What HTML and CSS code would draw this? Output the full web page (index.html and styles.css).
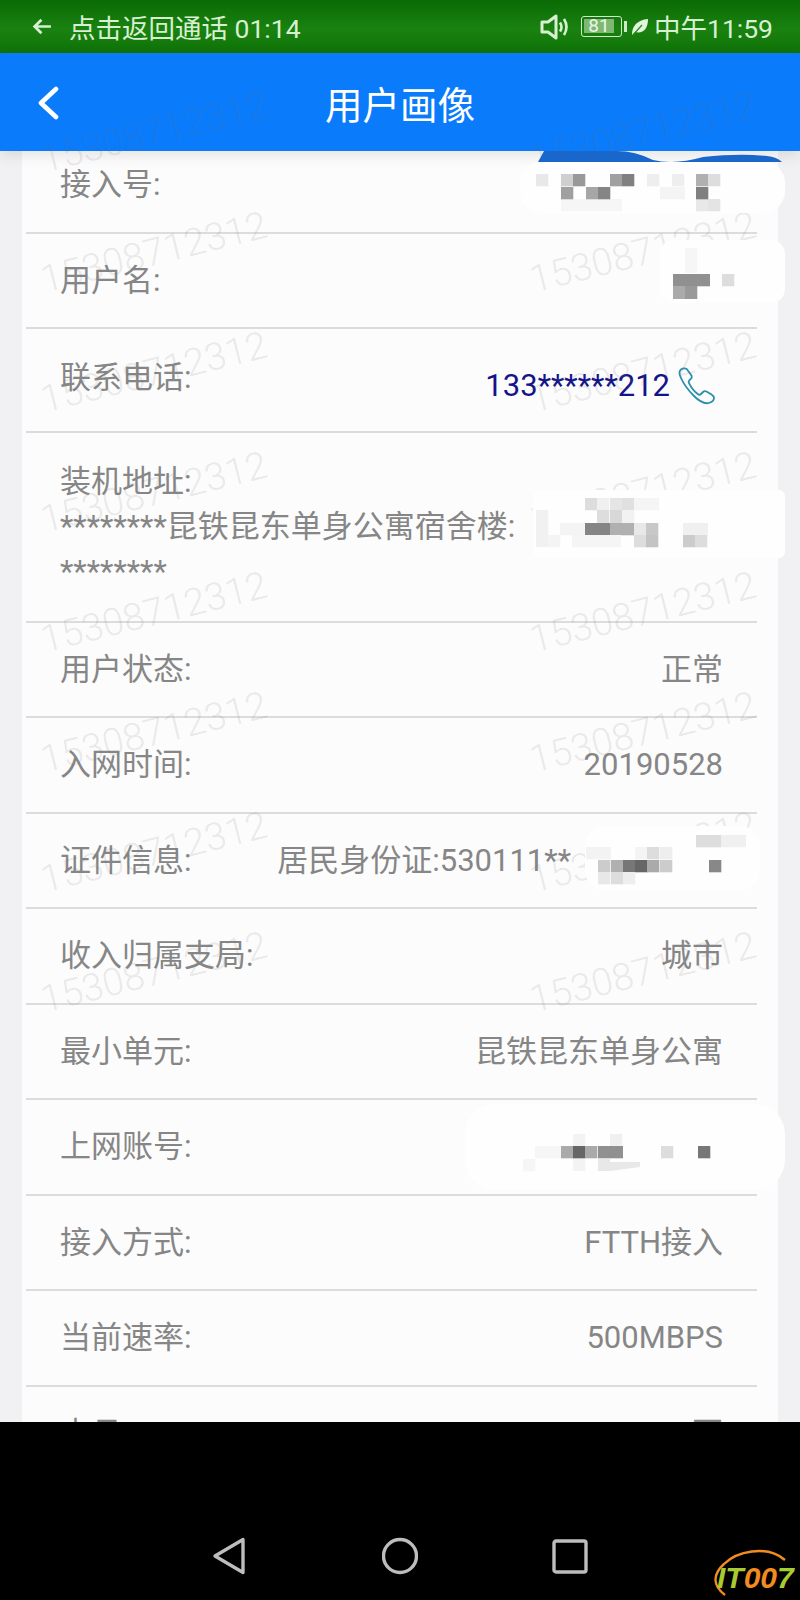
FILE: index.html
```html
<!DOCTYPE html>
<html lang="zh">
<head>
<meta charset="utf-8">
<title>用户画像</title>
<link rel="stylesheet" href="styles.css">
</head>
<body>
<div class="screen">
  <header class="status">
    <div class="status-left">
      <svg class="status-arrow" viewBox="0 0 20 20"><path d="M18 10H3M9 3.500 2.500 10 9 16.500" fill="none" stroke="#d8f0d2" stroke-width="2.600"/></svg>
      <span>点击返回通话 01:14</span>
    </div>
    <div class="status-right">
      <svg class="status-speaker" viewBox="0 0 30 26"><path d="M2 8h6l8-6v22l-8-6H2z" fill="none" stroke="#d8f0d2" stroke-width="3" stroke-linejoin="round"/><path d="M20 8.500q3 4.500 0 9M24 5q5 8 0 16" fill="none" stroke="#d8f0d2" stroke-width="2.600"/></svg>
      <div class="battery"><span class="battery-level">81</span></div>
      <span class="battery-nub"></span>
      <svg class="status-leaf" viewBox="0 0 18 18"><path d="M1 17C1 8 6 2 17 1c0 10-5 15-13 13z" fill="#e4f5de"/><path d="M2 17 11 7" stroke="#2a8a1e" stroke-width="1.200"/></svg>
      <span class="status-time">中午11:59</span>
    </div>
  </header>

  <div class="appbar">
    <svg class="appbar-back" viewBox="0 0 24 34"><path d="M20 3 5 17l15 14" fill="none" stroke="#fff" stroke-width="4.600" stroke-linecap="round" stroke-linejoin="round"/></svg>
    <h1 class="appbar-title">用户画像</h1>
  </div>

  <main class="content">
    <div class="card">
      <div class="row">
        <span>接入号:</span>
        <svg class="redact redact-access" viewBox="0 0 265 64">
          <rect y="10" width="265" height="52" rx="22" fill="#fefefe"/>
          <path d="M18 11 24 0H97q18 0 36 9 22 5 50-3 36-4 64-1 10 1 15 6z" fill="#1a67cc"/>
          <g fill="#e8e8e8"><rect x="16" y="23" width="12.300" height="12.300"/><rect x="127" y="23" width="12.300" height="12.300" fill="#eee"/><rect x="152" y="23" width="12.300" height="12.300" fill="#eee"/><rect x="176" y="48" width="12.300" height="12.300"/><rect x="188" y="48" width="12.300" height="12.300" fill="#e4e4e4"/><rect x="41" y="48" width="61" height="12.300" fill="#f6f6f6"/></g>
          <rect x="41" y="23" width="12.300" height="12.300" fill="#cfcfcf"/><rect x="53" y="23" width="12.300" height="12.300" fill="#999"/>
          <rect x="90" y="23" width="12.300" height="12.300" fill="#a0a0a0"/><rect x="102" y="23" width="12.300" height="12.300" fill="#808080"/>
          <rect x="176" y="23" width="12.300" height="12.300" fill="#b0b0b0"/><rect x="188" y="23" width="12.300" height="12.300" fill="#ddd"/>
          <rect x="41" y="36" width="12.300" height="12.300" fill="#a0a0a0"/><rect x="66" y="36" width="12.300" height="12.300" fill="#a6a6a6"/><rect x="78" y="36" width="12.300" height="12.300" fill="#858585"/>
          <rect x="140" y="36" width="25" height="12.300" fill="#f4f4f4"/><rect x="176" y="36" width="12.300" height="12.300" fill="#808080"/>
        </svg>
      </div>
      <div class="row">
        <span>用户名:</span>
        <svg class="redact redact-name" viewBox="0 0 125 63">
          <rect width="125" height="63" rx="14" fill="#fefefe"/>
          <rect x="25" y="8" width="12.300" height="25" fill="#f6f6f6"/>
          <rect x="13" y="34" width="37" height="12.300" fill="#909090"/><rect x="62" y="34" width="12.300" height="12.300" fill="#ddd"/>
          <rect x="13" y="46" width="12.300" height="13" fill="#aaa"/><rect x="25" y="46" width="12.300" height="13" fill="#999"/>
        </svg>
      </div>
      <div class="row row-top row-phone">
        <span>联系电话:</span>
        <div class="phone">
          <span>133******212</span>
          <svg class="phone-icon" viewBox="0 0 38 38"><path d="M3 2.500C1 4 1 7 3 11c3 7 8 13 13 18 5 5 11 8 15 7 3-1 5-3 5-5 0-1.500-1-2.500-2.500-3.500l-5-3c-1.500-.8-2.500-.5-3.500.5l-2 2c-1 1-2 1-3 .2-3-2-7-7-9-11-.6-1.200-.4-2 .5-3l1.500-1.500c1-1 1-2 .3-3.500L9.500 3C8.500 1 5 1 3 2.500z" fill="none" stroke="#2b8fae" stroke-width="1.800"/></svg>
        </div>
      </div>
      <div class="row row-top row-address">
        <div class="address">
          <div>装机地址:</div>
          <div>********昆铁昆东单身公寓宿舍楼:</div>
          <div>********</div>
        </div>
        <svg class="redact redact-address" viewBox="0 0 252 72">
          <rect width="252" height="68" rx="6" fill="#fefefe"/>
          <rect x="3" y="20" width="12.300" height="37" fill="#f1f1f1"/><rect x="15" y="45" width="12.300" height="12.300" fill="#f4f4f4"/>
          <rect x="52" y="8" width="12.300" height="12.300" fill="#ddd"/><rect x="64" y="8" width="12.300" height="12.300" fill="#f0f0f0"/><rect x="77" y="8" width="12.300" height="12.300" fill="#e5e5e5"/><rect x="89" y="8" width="12.300" height="12.300" fill="#e0e0e0"/><rect x="101" y="8" width="25" height="12.300" fill="#f5f5f5"/>
          <rect x="64" y="20" width="12.300" height="13" fill="#ddd"/><rect x="77" y="20" width="12.300" height="13" fill="#d8d8d8"/><rect x="89" y="20" width="12.300" height="13" fill="#f2f2f2"/>
          <rect x="27" y="33" width="25" height="12.300" fill="#f4f4f4"/><rect x="52" y="33" width="25" height="12.300" fill="#858585"/><rect x="77" y="33" width="25" height="12.300" fill="#b0b0b0"/><rect x="101" y="33" width="12.300" height="12.300" fill="#e8e8e8"/><rect x="113" y="33" width="12.300" height="12.300" fill="#c8c8c8"/><rect x="150" y="33" width="25" height="12.300" fill="#f0f0f0"/>
          <rect x="39" y="45" width="49" height="12.300" fill="#f5f5f5"/><rect x="101" y="45" width="12.300" height="12.300" fill="#ddd"/><rect x="113" y="45" width="12.300" height="12.300" fill="#c4c4c4"/><rect x="150" y="45" width="12.300" height="12.300" fill="#ccc"/><rect x="162" y="45" width="12.300" height="12.300" fill="#ddd"/>
        </svg>
      </div>
      <div class="row"><span>用户状态:</span><span>正常</span></div>
      <div class="row"><span>入网时间:</span><span>20190528</span></div>
      <div class="row">
        <span>证件信息:</span>
        <span class="value-id">居民身份证:530111**</span>
        <svg class="redact redact-id" viewBox="0 0 175 70">
          <rect width="175" height="64" rx="20" fill="#fefefe"/>
          <rect x="111" y="9" width="25" height="12.300" fill="#ddd"/><rect x="136" y="9" width="25" height="12.300" fill="#f0f0f0"/>
          <rect x="1" y="21" width="25" height="12.300" fill="#f3f3f3"/><rect x="50" y="21" width="12.300" height="12.300" fill="#f4f4f4"/><rect x="62" y="21" width="12.300" height="12.300" fill="#ddd"/><rect x="75" y="21" width="12.300" height="12.300" fill="#eee"/>
          <rect x="13" y="34" width="12.300" height="12.300" fill="#ccc"/><rect x="26" y="34" width="12.300" height="12.300" fill="#b0b0b0"/><rect x="38" y="34" width="12.300" height="12.300" fill="#777"/><rect x="50" y="34" width="12.300" height="12.300" fill="#666"/><rect x="62" y="34" width="12.300" height="12.300" fill="#aaa"/><rect x="75" y="34" width="12.300" height="12.300" fill="#ccc"/><rect x="124" y="34" width="12.300" height="12.300" fill="#888"/>
          <rect x="13" y="46" width="12.300" height="12.300" fill="#e8e8e8"/><rect x="26" y="46" width="12.300" height="12.300" fill="#ddd"/><rect x="38" y="46" width="12.300" height="12.300" fill="#eee"/>
        </svg>
      </div>
      <div class="row"><span>收入归属支局:</span><span>城市</span></div>
      <div class="row"><span>最小单元:</span><span>昆铁昆东单身公寓</span></div>
      <div class="row">
        <span>上网账号:</span>
        <svg class="redact redact-account" viewBox="0 0 320 88">
          <rect width="320" height="86" rx="30" fill="#fefefe"/>
          <rect x="108" y="30" width="12.300" height="37" fill="#f3f3f3"/><rect x="145" y="30" width="12.300" height="12.300" fill="#f0f0f0"/><rect x="70" y="42" width="26" height="12.300" fill="#f6f6f6"/>
          <rect x="96" y="42" width="12.300" height="12.300" fill="#aaa"/><rect x="108" y="42" width="12.300" height="12.300" fill="#666"/><rect x="120" y="42" width="12.300" height="12.300" fill="#aaa"/><rect x="133" y="42" width="25" height="12.300" fill="#909090"/>
          <rect x="196" y="42" width="12.300" height="12.300" fill="#ddd"/><rect x="233" y="42" width="12.300" height="12.300" fill="#777"/>
          <path d="M133 55h12v3h30v5l-30 4h-12z" fill="#e8e8e8"/><rect x="58" y="55" width="12.300" height="12.300" fill="#f6f6f6"/>
        </svg>
      </div>
      <div class="row"><span>接入方式:</span><span>FTTH接入</span></div>
      <div class="row"><span>当前速率:</span><span>500MBPS</span></div>
      <div class="row"><span>本月:</span><span>否</span></div>
    </div>
  </main>

  <nav class="navbar">
    <svg class="nav-icon" viewBox="0 0 36 38"><path d="M31 2.500v33L3 19z" fill="none" stroke="#bdbdbd" stroke-width="3.400" stroke-linejoin="round"/></svg>
    <svg class="nav-icon" viewBox="0 0 36 38"><circle cx="18" cy="19" r="16.500" fill="none" stroke="#bdbdbd" stroke-width="3.400"/></svg>
    <svg class="nav-icon" viewBox="0 0 36 38"><rect x="2" y="4" width="32" height="31" rx="2" fill="none" stroke="#bdbdbd" stroke-width="3.400"/></svg>
  </nav>

  <div class="watermarks">
    <span>15308712312</span><span>15308712312</span>
    <span>15308712312</span><span>15308712312</span>
    <span>15308712312</span><span>15308712312</span>
    <span>15308712312</span><span>15308712312</span>
    <span>15308712312</span><span>15308712312</span>
    <span>15308712312</span><span>15308712312</span>
    <span>15308712312</span><span>15308712312</span>
    <span>15308712312</span><span>15308712312</span>
  </div>

  <svg class="site-logo" viewBox="0 0 100 60">
    <path d="M25 55C13 46 12 35 24 24 36 12 66 4 85 20" fill="none" stroke="#f28c1e" stroke-width="2.400"/>
    <text x="17" y="48" class="logo-text"><tspan fill="#a9cb32">IT</tspan><tspan fill="#f28c1e">00</tspan><tspan fill="#a9cb32">7</tspan></text>
  </svg>
</div>
</body>
</html>
```

FILE: styles.css
```css
* { box-sizing: border-box; }

html, body {
  margin: 0;
  padding: 0;
  background: #000;
}

.screen {
  position: relative;
  width: 800px;
  height: 1600px;
  display: flex;
  flex-direction: column;
  overflow: hidden;
  font-family: Roboto, "Noto Sans CJK SC", sans-serif;
}

/* status bar */
.status {
  height: 53px;
  flex: none;
  display: flex;
  align-items: center;
  justify-content: space-between;
  padding: 0 27px 0 32px;
  background: linear-gradient(#0a6b05, #1a8210 55%, #0f7308);
  color: #d8f0d2;
  font-size: 26.500px;
}

.status-left,
.status-right {
  display: flex;
  align-items: center;
}

.status-arrow {
  width: 21px;
  height: 21px;
  margin-right: 16px;
}

.status-speaker {
  width: 30px;
  height: 26px;
  margin-right: 11px;
}

.battery {
  width: 41px;
  height: 21px;
  padding: 2px;
  border: 1.5px solid #cfeac8;
  border-radius: 3px;
}

.battery-level {
  display: block;
  width: 30px;
  height: 14px;
  background: #7fb873;
  color: #e8f6e4;
  font-size: 19px;
  line-height: 14px;
  text-align: center;
}

.battery-nub {
  width: 3px;
  height: 11px;
  margin: 0 4px 0 2px;
  background: #cfeac8;
}

.status-leaf {
  width: 18px;
  height: 18px;
  margin-right: 5px;
}

/* app bar */
.appbar {
  position: relative;
  height: 98px;
  flex: none;
  display: flex;
  align-items: center;
  justify-content: center;
  background: #0a7bfb;
  box-shadow: 0 4px 14px rgba(0, 0, 0, 0.1);
}

.appbar-back {
  position: absolute;
  left: 36px;
  top: 33px;
  width: 24px;
  height: 34px;
}

.appbar-title {
  margin: 0;
  color: #fff;
  font-size: 37.500px;
  font-weight: 400;
}

/* content */
.content {
  height: 1271px;
  flex: none;
  overflow: hidden;
  background: #f1f1f4;
}

.card {
  width: 756px;
  margin: -13px 0 0 22px;
  padding: 0 21px 0 4px;
  background: #fcfcfc;
  color: #868686;
  font-size: 31px;
  line-height: 45px;
}

.row {
  position: relative;
  height: 95.5px;
  display: flex;
  align-items: center;
  justify-content: space-between;
  padding: 0 34px;
  border-bottom: 2px solid #dcdcdc;
}

.row-top {
  align-items: flex-start;
  padding-top: 26px;
}

.row-phone { height: 104px; }

.row-address { height: 189.5px; }

.phone {
  display: flex;
  align-items: center;
  gap: 8px;
  margin: 8px 7px 0 0;
  color: #14148a;
}

.phone-icon {
  width: 38px;
  height: 38px;
}

.value-id { margin-right: 152px; }

/* pixelated redactions painted over the values */
.redact {
  position: absolute;
  z-index: 2;
}

.redact-access {
  top: 13px;
  right: -28px;
  width: 265px;
  height: 64px;
}

.redact-name {
  top: 6px;
  right: -28px;
  width: 125px;
  height: 63px;
}

.redact-address {
  top: 57px;
  right: -28px;
  width: 252px;
  height: 72px;
}

.redact-id {
  top: 12px;
  right: -3px;
  width: 175px;
  height: 70px;
}

.redact-account {
  top: 4px;
  right: -28px;
  width: 320px;
  height: 88px;
}

/* navigation bar */
.navbar {
  flex: 1;
  display: grid;
  grid-template-columns: repeat(3, 170px);
  justify-content: center;
  justify-items: center;
  align-items: start;
  padding-top: 115px;
  background: #000;
}

.nav-icon {
  width: 36px;
  height: 38px;
}

/* overlays */
.watermarks {
  position: absolute;
  z-index: 1;
  top: 72px;
  left: 34px;
  display: grid;
  grid-template-columns: 240px 240px;
  grid-auto-rows: 120px;
  column-gap: 249px;
  justify-items: center;
  align-items: center;
  pointer-events: none;
}

.watermarks span {
  transform: rotate(-14deg);
  color: rgba(110, 110, 110, 0.14);
  font-size: 38px;
  font-weight: 300;
  line-height: 1;
  white-space: nowrap;
}

.site-logo {
  position: absolute;
  z-index: 3;
  right: 0;
  bottom: 0;
  width: 100px;
  height: 60px;
}

.logo-text {
  font-family: "Liberation Sans", sans-serif;
  font-size: 30px;
  font-style: italic;
  font-weight: 700;
}
```
